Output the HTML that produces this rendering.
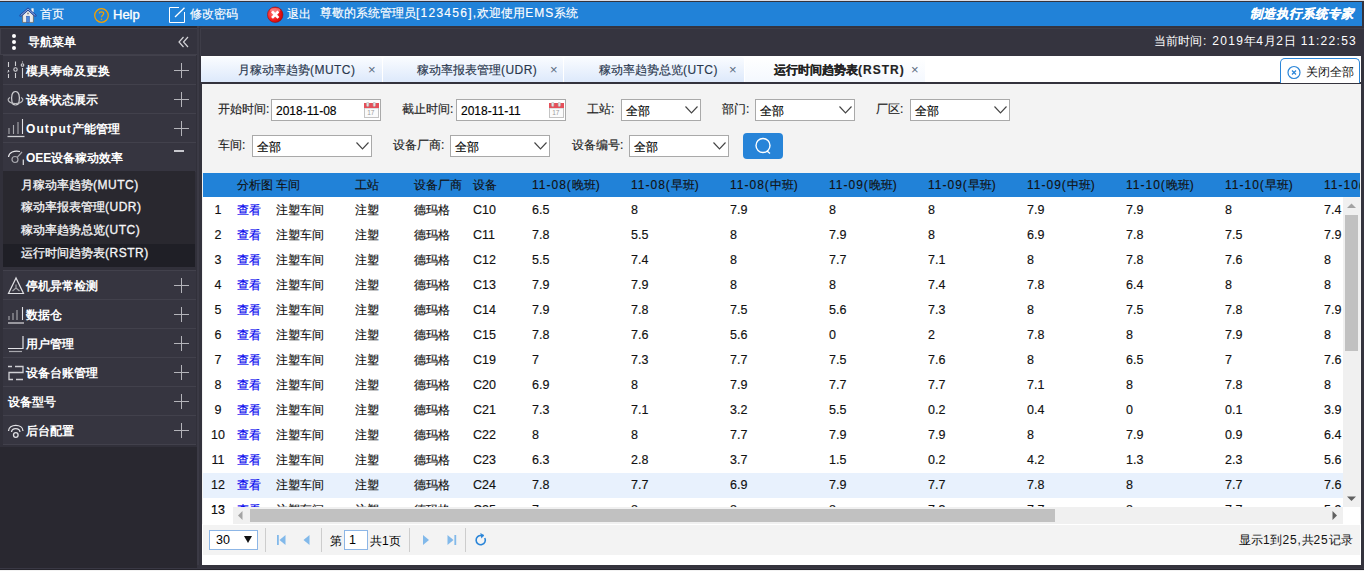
<!DOCTYPE html>
<html><head><meta charset="utf-8">
<style>
*{box-sizing:border-box}
html,body{margin:0;padding:0}
body{width:1364px;height:571px;overflow:hidden;position:relative;background:#34333d;font-family:"Liberation Sans",sans-serif;font-size:12px;color:#000}
.a{position:absolute;white-space:nowrap}
#top0{left:0;top:0;width:1364px;height:1px;background:#dcdce4}
#top1{left:0;top:1px;width:1364px;height:1px;background:#34333d}
#topbar{left:0;top:2px;width:1364px;height:24px;background:#2182d8}
.tt{color:#fff;font-size:12px;top:7px;line-height:14px}
/* sidebar */
#side{left:0;top:26px;width:197px;height:542px;background:#292830}
#sidepanel{left:0;top:55px;width:197px;height:392px;background:#31303a}
#sidestrip{left:197px;top:26px;width:2px;height:543px;background:#3b3a45}
#sidehead{left:0;top:28px;width:198px;height:27px;background:#34333e;border:1px solid #403f4a}
.mi{left:3px;width:193px;height:29px;background:#363540;border-top:1px solid #42414c}
.mt{color:#fff;font-weight:bold;font-size:12px;line-height:14px}
.plus{position:absolute;width:15px;height:15px}
.plus:before{content:"";position:absolute;left:0;top:7px;width:15px;height:1px;background:#b4b4ba}
.plus:after{content:"";position:absolute;left:7px;top:0;width:1px;height:15px;background:#b4b4ba}
#sub{left:3px;top:171px;width:192px;height:96px;background:#29282f}
#subsel{left:3px;top:244px;width:192px;height:23px;background:#1f1f26}
.si{color:#f6f6f8;font-size:12px;line-height:14px;left:21px;-webkit-text-stroke:0.3px #f6f6f8!important}
/* right */
#rline{left:199px;top:26px;width:3px;height:543px;background:#33323c}
#rhead{left:200px;top:28px;width:1164px;height:28px;background:#35343f;border-top:1px solid #3e3d48;border-left:1px solid #3e3d48}
#tabs{left:201px;top:56px;width:1160px;height:27px;background:#fff;border-bottom:1px solid #33323c}
.tab{top:57px;height:25px;background:linear-gradient(#fafcff,#dde9fb);border-radius:3px 3px 0 0}
.tabt{font-size:12px;color:#29374d;top:63px;line-height:14px}
.tabx{font-size:13px;color:#5a6b80;top:63px;line-height:14px}
#content{left:202px;top:84px;width:1159px;height:481px;background:#f3f3f3}
#rborder{left:1361px;top:56px;width:3px;height:515px;background:#34333d}
#bborder{left:197px;top:565px;width:1167px;height:3px;background:#34333d}
.lbl{font-size:12px;color:#222;line-height:14px}
.inp{background:#fff;border:1px solid #a9a9a9;height:22px}
.selt{font-size:12px;color:#000;line-height:14px}
.chev{position:absolute;width:9px;height:9px;border-right:1px solid #555;border-bottom:1px solid #555;transform:rotate(45deg)}
#thead{left:203px;top:173px;width:1157px;height:24px;background:#2182d8;overflow:hidden}
.th{font-size:12px;color:#111;top:5px;line-height:14px}
.th .l{letter-spacing:1px}
#tbody{left:203px;top:197px;width:1140px;height:310px;overflow:hidden;background:#fff;border-top:1px solid #fff}
.row{left:0;width:1140px;height:25px}
.row.hl{background:#e8f1fd}
.td{font-size:12.5px;color:#111;line-height:14px}
.lk{color:#0000ee}
.cj{font-size:12px}

#bwhite{left:0;top:570px;width:1364px;height:1px;background:#f2f2f2}
#bl1{left:0;top:568px;width:1364px;height:1px;background:#393844}
#bl2{left:0;top:569px;width:1364px;height:1px;background:#25242c}

.td,.th,.lbl,.selt,.tabt,.tt,.si{-webkit-text-stroke:0.15px currentColor}

</style></head><body>
<div class="a" id="top0"></div>
<div class="a" id="top1"></div>
<div class="a" id="topbar"></div>
<div class="a" style="left:1362px;top:1px;width:2px;height:25px;background:#34333d"></div>
<svg class="a" style="left:18px;top:4px" width="20" height="20" viewBox="0 0 20 20">
<rect x="13.4" y="4.3" width="2.2" height="4" fill="#f2f2f2"/>
<path d="M4.6 11 L10 6 L15.4 11 V18.4 H4.6 Z" fill="#ebebeb" stroke="#6d5c4a" stroke-width="0.7"/>
<path d="M2.6 11.6 L10 5 L17.4 11.6" fill="none" stroke="#23449c" stroke-width="2.4" stroke-linecap="round"/>
<path d="M2.6 11.6 L10 5 L17.4 11.6" fill="none" stroke="#9cc0f0" stroke-width="0.9"/>
<rect x="9.2" y="8.7" width="1.6" height="1.6" fill="#7a7a7a"/>
<rect x="8.5" y="12.2" width="3" height="6.1" fill="#4a86dc" stroke="#2550a8" stroke-width="0.5"/>
</svg>
<div class="a tt" style="left:40px">首页</div>
<svg class="a" style="left:94px;top:8px" width="16" height="16" viewBox="0 0 16 16">
<circle cx="7.5" cy="7.5" r="6.8" fill="none" stroke="#f4a100" stroke-width="1.3"/>
<path d="M5.3 5.6 C5.3 3.2 9.7 3.2 9.7 5.6 C9.7 7.2 7.5 7.2 7.5 9.2" fill="none" stroke="#f4a100" stroke-width="1.2"/>
<circle cx="7.5" cy="11.3" r="0.8" fill="#f4a100"/>
</svg>
<div class="a tt" style="left:113px;font-size:13px;top:7px;line-height:15px;-webkit-text-stroke:0.35px #fff">Help</div>
<svg class="a" style="left:169px;top:7px" width="17" height="17" viewBox="0 0 17 17">
<path d="M10 0.5 H0.5 V15.5 H15.5 V5" fill="none" stroke="#fff" stroke-width="1"/>
<path d="M6 10 L15.5 0.8" fill="none" stroke="#fff" stroke-width="1.3"/>
</svg>
<div class="a tt" style="left:190px">修改密码</div>
<svg class="a" style="left:267px;top:6px" width="17" height="17" viewBox="0 0 17 17">
<defs><radialGradient id="rg" cx="0.35" cy="0.45" r="0.75"><stop offset="0" stop-color="#ff7070"/><stop offset="0.55" stop-color="#f01818"/><stop offset="1" stop-color="#b00000"/></radialGradient></defs>
<circle cx="8.2" cy="8.7" r="7.8" fill="url(#rg)" stroke="#8a1010" stroke-width="0.5"/>
<ellipse cx="8.2" cy="4.2" rx="5" ry="2.3" fill="#ffb0b0" opacity="0.55"/>
<path d="M5 5.5 L11.4 11.9 M11.4 5.5 L5 11.9" stroke="#fff" stroke-width="2.7"/>
</svg>
<div class="a tt" style="left:287px">退出</div>
<div class="a tt" style="left:320px;top:6px">尊敬的系统管理员<span style="letter-spacing:1.25px">[123456],</span>欢迎使用<span style="letter-spacing:1px">EMS</span>系统</div>
<div class="a tt" style="left:1250px;font-weight:bold;font-style:italic;font-size:12.5px">制造执行系统专家</div>

<div class="a" id="side"></div>
<div class="a" id="sidepanel"></div>
<div class="a" id="sidehead"></div>
<div class="a" style="left:12px;top:34px;width:4px;height:4px;border-radius:2px;background:#fff"></div>
<div class="a" style="left:12px;top:40px;width:4px;height:4px;border-radius:2px;background:#fff"></div>
<div class="a" style="left:12px;top:46px;width:4px;height:4px;border-radius:2px;background:#fff"></div>
<div class="a mt" style="left:28px;top:35px">导航菜单</div>
<svg class="a" style="left:178px;top:36px" width="11" height="12" viewBox="0 0 11 12" fill="none" stroke="#d4d4d8" stroke-width="1.2"><path d="M5.5 1 L1 6 L5.5 11 M10 1 L5.5 6 L10 11"/></svg>

<!-- items -->
<div class="a mi" style="top:55px"></div>
<div class="a mi" style="top:84px"></div>
<div class="a mi" style="top:113px"></div>
<div class="a mi" style="top:142px;height:30px"></div>
<div class="a" id="sub"></div>
<div class="a" id="subsel"></div>
<div class="a mi" style="top:270px"></div>
<div class="a mi" style="top:299px"></div>
<div class="a mi" style="top:328px"></div>
<div class="a mi" style="top:357px"></div>
<div class="a mi" style="top:386px"></div>
<div class="a mi" style="top:415px;height:30px;border-bottom:1px solid #42414c"></div>

<div class="a mt" style="left:26px;top:64px">模具寿命及更换</div>
<div class="a mt" style="left:26px;top:93px">设备状态展示</div>
<div class="a mt" style="left:26px;top:122px"><span style="letter-spacing:1.1px">Output</span>产能管理</div>
<div class="a mt" style="left:26px;top:151px">OEE设备稼动效率</div>
<div class="a si" style="top:178px">月稼动率趋势<span style="letter-spacing:0.5px">(MUTC)</span></div>
<div class="a si" style="top:200px">稼动率报表管理<span style="letter-spacing:0.5px">(UDR)</span></div>
<div class="a si" style="top:223px">稼动率趋势总览<span style="letter-spacing:0.5px">(UTC)</span></div>
<div class="a si" style="top:246px">运行时间趋势表<span style="letter-spacing:0.5px">(RSTR)</span></div>
<div class="a mt" style="left:26px;top:279px">停机异常检测</div>
<div class="a mt" style="left:26px;top:308px">数据仓</div>
<div class="a mt" style="left:26px;top:337px">用户管理</div>
<div class="a mt" style="left:26px;top:366px">设备台账管理</div>
<div class="a mt" style="left:8px;top:395px">设备型号</div>
<div class="a mt" style="left:26px;top:424px">后台配置</div>

<div class="plus" style="left:174px;top:63px"></div>
<div class="plus" style="left:174px;top:92px"></div>
<div class="plus" style="left:174px;top:121px"></div>
<div class="a" style="left:174px;top:150px;width:10px;height:2px;background:#c8c8ce"></div>
<div class="plus" style="left:174px;top:278px"></div>
<div class="plus" style="left:174px;top:307px"></div>
<div class="plus" style="left:174px;top:336px"></div>
<div class="plus" style="left:174px;top:365px"></div>
<div class="plus" style="left:174px;top:394px"></div>
<div class="plus" style="left:174px;top:423px"></div>

<!-- icons -->
<svg class="a" style="left:6px;top:60px" width="20" height="20" viewBox="0 0 20 20" fill="none" stroke="#d0d0d4" stroke-width="1.1">
<path d="M2.5 2 V7 M2.5 10 V11 M2.5 14 V18 M9.5 1.5 V6 M9.5 13 V18 M16.5 8 V18"/>
<path d="M1.5 12 A1.3 1.3 0 0 0 3 11" /><circle cx="9.5" cy="9.5" r="1.7"/><circle cx="16.5" cy="5" r="1.3"/><path d="M16.5 1.5 V2.5"/>
</svg>
<svg class="a" style="left:6px;top:89px" width="20" height="20" viewBox="0 0 20 20" fill="none" stroke="#d0d0d4" stroke-width="1.2">
<path d="M6 13 C5 7 6 2.5 9.5 2.5 C13 2.5 14 7 13 13 C12.5 17 6.5 17 6 13 Z"/>
<path d="M4 8.5 C0 10.5 3 14.5 9.5 14.5 C16 14.5 19 10.5 15 8.5" stroke="#b8b8bc"/>
</svg>
<svg class="a" style="left:6px;top:118px" width="20" height="20" viewBox="0 0 20 20" fill="none" stroke="#d0d0d4" stroke-width="1.1">
<path d="M1.5 18.5 H18.5" stroke-width="1.3"/><path d="M3 10 V16 M7.5 7 V16 M12 4 V16" stroke="#a8a8ae"/><path d="M16.5 1 V16" stroke="#e0e0e4"/>
</svg>
<svg class="a" style="left:6px;top:147px" width="20" height="20" viewBox="0 0 20 20" fill="none" stroke="#d0d0d4" stroke-width="1.2">
<path d="M2.5 10 C3 5.5 8 3 14 4.5" stroke="#e8e8ec"/><circle cx="9" cy="12.5" r="3" stroke="#a8a8ae"/><path d="M11.2 10.3 L16 5" stroke="#a8a8ae"/><path d="M17.3 12.5 V18" stroke="#e0e0e4"/>
</svg>
<svg class="a" style="left:6px;top:276px" width="20" height="20" viewBox="0 0 20 20" fill="none" stroke="#e0e0e4" stroke-width="1.2">
<path d="M10 2 L2.5 17.5 H17.5 Z"/><path d="M10 8.5 V12 L6.5 15 M10 12 L13.5 15" stroke="#a0a0a6"/>
</svg>
<svg class="a" style="left:6px;top:305px" width="20" height="20" viewBox="0 0 20 20" fill="none" stroke="#d0d0d4" stroke-width="1.1">
<path d="M2 18 H18" stroke-width="1.3"/><path d="M3 11 V15 M7 8 V15 M11 5 V15" stroke="#a8a8ae"/><path d="M16.5 2 V15" stroke="#e0e0e4"/>
</svg>
<svg class="a" style="left:6px;top:334px" width="20" height="20" viewBox="0 0 20 20" fill="none" stroke="#e0e0e4" stroke-width="1.2">
<path d="M2 14.5 H17 V2"/><path d="M3 17.5 H16" stroke="#a8a8ae"/>
</svg>
<svg class="a" style="left:6px;top:363px" width="20" height="20" viewBox="0 0 20 20" fill="none" stroke="#d0d0d4" stroke-width="1.3">
<path d="M2 3.5 H6 M9 3.5 H17 V9.5 H3 V16.5 H7 M10 16.5 H17"/>
</svg>
<svg class="a" style="left:6px;top:421px" width="20" height="20" viewBox="0 0 20 20" fill="none" stroke="#e0e0e4" stroke-width="1.3">
<path d="M2.5 10 C2.5 2.5 17 2.5 17 10 M5.5 11 C6 6.5 13.5 6.5 14 11"/><circle cx="9.8" cy="14" r="2.3"/>
</svg>

<div class="a" id="rline"></div>
<div class="a" id="sidestrip"></div>
<div class="a" id="rhead"></div>
<div class="a" style="left:1154px;top:34px;color:#fff;font-size:12px;line-height:14px">当前时间<span style="margin-left:1px;margin-right:6px">:</span><span style="letter-spacing:1.3px">2019</span>年<span style="letter-spacing:1.3px">4</span>月<span style="letter-spacing:1.3px">2</span>日<span style="letter-spacing:1.3px"> 11:22:53</span></div>
<div class="a" id="tabs"></div>
<div class="a" id="rborder"></div>

<div class="a tab" style="left:201px;width:181px"></div>
<div class="a tabt" style="left:238px">月稼动率趋势<span style="letter-spacing:0.45px">(MUTC)</span></div>
<div class="a tabx" style="left:368px">×</div>
<div class="a tab" style="left:383px;width:180px"></div>
<div class="a tabt" style="left:417px">稼动率报表管理<span style="letter-spacing:0.45px">(UDR)</span></div>
<div class="a tabx" style="left:550px">×</div>
<div class="a tab" style="left:564px;width:180px"></div>
<div class="a tabt" style="left:599px">稼动率趋势总览<span style="letter-spacing:0.45px">(UTC)</span></div>
<div class="a tabx" style="left:729px">×</div>
<div class="a tab" style="left:745px;width:180px;background:linear-gradient(#ffffff,#f4f8fe)"></div>
<div class="a tabt" style="left:774px;font-weight:bold;color:#222">运行时间趋势表<span style="letter-spacing:1px">(RSTR)</span></div>
<div class="a tabx" style="left:911px">×</div>

<div class="a" style="left:1280px;top:58px;width:80px;height:25px;border:1px solid #2a85d8;border-bottom:0;border-radius:5px 5px 0 0;background:#fff"></div>
<svg class="a" style="left:1287px;top:65px" width="15" height="15" viewBox="0 0 15 15">
<circle cx="7" cy="7.5" r="6" fill="none" stroke="#2a85d8" stroke-width="1.2"/>
<path d="M5 5.5 L9 9.5 M9 5.5 L5 9.5" stroke="#2a85d8" stroke-width="1.2"/>
</svg>
<div class="a" style="left:1306px;top:65px;font-size:12px;line-height:14px;color:#111">关闭全部</div>

<div class="a" id="content"></div>

<!-- filter row 1 -->
<div class="a lbl" style="left:218px;top:102px">开始时间:</div>
<div class="a inp" style="left:271px;top:99px;width:110px"></div>
<div class="a selt" style="left:276px;top:104px">2018-11-08</div>
<div class="a lbl" style="left:402px;top:102px">截止时间:</div>
<div class="a inp" style="left:456px;top:99px;width:110px"></div>
<div class="a selt" style="left:461px;top:104px">2018-11-11</div>
<div class="a lbl" style="left:587px;top:102px">工站:</div>
<div class="a inp" style="left:621px;top:99px;width:80px"></div>
<div class="a selt" style="left:626px;top:104px">全部</div>
<div class="a lbl" style="left:722px;top:102px">部门:</div>
<div class="a inp" style="left:755px;top:99px;width:100px"></div>
<div class="a selt" style="left:760px;top:104px">全部</div>
<div class="a lbl" style="left:876px;top:102px">厂区:</div>
<div class="a inp" style="left:910px;top:99px;width:100px"></div>
<div class="a selt" style="left:915px;top:104px">全部</div>

<!-- filter row 2 -->
<div class="a lbl" style="left:218px;top:138px">车间:</div>
<div class="a inp" style="left:252px;top:135px;width:120px"></div>
<div class="a selt" style="left:257px;top:140px">全部</div>
<div class="a lbl" style="left:393px;top:138px">设备厂商:</div>
<div class="a inp" style="left:450px;top:135px;width:100px"></div>
<div class="a selt" style="left:455px;top:140px">全部</div>
<div class="a lbl" style="left:572px;top:138px">设备编号:</div>
<div class="a inp" style="left:629px;top:135px;width:100px"></div>
<div class="a selt" style="left:634px;top:140px">全部</div>
<div class="a" style="left:743px;top:133px;width:40px;height:26px;background:#2784d8;border-radius:4px"></div>
<svg class="a" style="left:754px;top:137px" width="19" height="18" viewBox="0 0 19 18" fill="none" stroke="#fff" stroke-width="1.4">
<circle cx="9" cy="8.5" r="7"/><path d="M13 14 L16 16.5"/>
</svg>

<!-- calendar icons -->
<svg class="a" style="left:364px;top:102px" width="15" height="16" viewBox="0 0 15 16">
<rect x="0.5" y="6" width="14" height="9.5" fill="#fbfbfb" stroke="#c4c4c4" stroke-width="1"/>
<rect x="0" y="1" width="15" height="5" fill="#e5505a"/>
<rect x="2.6" y="0.3" width="2.2" height="4.2" rx="1" fill="#e6e6e6" stroke="#b0b0b0" stroke-width="0.6"/>
<rect x="9.2" y="0.3" width="2.2" height="4.2" rx="1" fill="#e6e6e6" stroke="#b0b0b0" stroke-width="0.6"/>
<text x="3.2" y="12.6" font-size="6.5" fill="#9a9a9a" font-family="Liberation Sans">17</text>
</svg>
<svg class="a" style="left:549px;top:102px" width="15" height="16" viewBox="0 0 15 16">
<rect x="0.5" y="6" width="14" height="9.5" fill="#fbfbfb" stroke="#c4c4c4" stroke-width="1"/>
<rect x="0" y="1" width="15" height="5" fill="#e5505a"/>
<rect x="2.6" y="0.3" width="2.2" height="4.2" rx="1" fill="#e6e6e6" stroke="#b0b0b0" stroke-width="0.6"/>
<rect x="9.2" y="0.3" width="2.2" height="4.2" rx="1" fill="#e6e6e6" stroke="#b0b0b0" stroke-width="0.6"/>
<text x="3.2" y="12.6" font-size="6.5" fill="#9a9a9a" font-family="Liberation Sans">17</text>
</svg>
<!-- chevrons -->
<svg class="a" style="left:685px;top:106px" width="13" height="8" viewBox="0 0 13 8"><path d="M0.5 0.5 L6.5 6.8 L12.5 0.5" fill="none" stroke="#444" stroke-width="1.15"/></svg>
<svg class="a" style="left:839px;top:106px" width="13" height="8" viewBox="0 0 13 8"><path d="M0.5 0.5 L6.5 6.8 L12.5 0.5" fill="none" stroke="#444" stroke-width="1.15"/></svg>
<svg class="a" style="left:994px;top:106px" width="13" height="8" viewBox="0 0 13 8"><path d="M0.5 0.5 L6.5 6.8 L12.5 0.5" fill="none" stroke="#444" stroke-width="1.15"/></svg>
<svg class="a" style="left:356px;top:142px" width="13" height="8" viewBox="0 0 13 8"><path d="M0.5 0.5 L6.5 6.8 L12.5 0.5" fill="none" stroke="#444" stroke-width="1.15"/></svg>
<svg class="a" style="left:534px;top:142px" width="13" height="8" viewBox="0 0 13 8"><path d="M0.5 0.5 L6.5 6.8 L12.5 0.5" fill="none" stroke="#444" stroke-width="1.15"/></svg>
<svg class="a" style="left:713px;top:142px" width="13" height="8" viewBox="0 0 13 8"><path d="M0.5 0.5 L6.5 6.8 L12.5 0.5" fill="none" stroke="#444" stroke-width="1.15"/></svg>

<div class="a" id="thead">
<div class="a th" style="left:34px">分析图</div>
<div class="a th" style="left:73px">车间</div>
<div class="a th" style="left:152px">工站</div>
<div class="a th" style="left:211px">设备厂商</div>
<div class="a th" style="left:270px">设备</div>
<div class="a th" style="left:329px"><span class="l">11-08(</span>晚班<span class="l">)</span></div>
<div class="a th" style="left:428px"><span class="l">11-08(</span>早班<span class="l">)</span></div>
<div class="a th" style="left:527px"><span class="l">11-08(</span>中班<span class="l">)</span></div>
<div class="a th" style="left:626px"><span class="l">11-09(</span>晚班<span class="l">)</span></div>
<div class="a th" style="left:725px"><span class="l">11-09(</span>早班<span class="l">)</span></div>
<div class="a th" style="left:824px"><span class="l">11-09(</span>中班<span class="l">)</span></div>
<div class="a th" style="left:923px"><span class="l">11-10(</span>晚班<span class="l">)</span></div>
<div class="a th" style="left:1022px"><span class="l">11-10(</span>早班<span class="l">)</span></div>
<div class="a th" style="left:1121px"><span class="l">11-10(</span>中班<span class="l">)</span></div>
</div>
<div class="a" id="tbody">
<div class="a row" style="top:0px"></div>
<div class="a td" style="left:0;width:30px;text-align:center;top:5px">1</div>
<div class="a td lk cj" style="left:34px;top:5px">查看</div>
<div class="a td cj" style="left:73px;top:5px">注塑车间</div>
<div class="a td cj" style="left:152px;top:5px">注塑</div>
<div class="a td cj" style="left:211px;top:5px">德玛格</div>
<div class="a td" style="left:270px;top:5px">C10</div>
<div class="a td" style="left:329px;top:5px">6.5</div>
<div class="a td" style="left:428px;top:5px">8</div>
<div class="a td" style="left:527px;top:5px">7.9</div>
<div class="a td" style="left:626px;top:5px">8</div>
<div class="a td" style="left:725px;top:5px">8</div>
<div class="a td" style="left:824px;top:5px">7.9</div>
<div class="a td" style="left:923px;top:5px">7.9</div>
<div class="a td" style="left:1022px;top:5px">8</div>
<div class="a td" style="left:1121px;top:5px">7.4</div>
<div class="a row" style="top:25px"></div>
<div class="a td" style="left:0;width:30px;text-align:center;top:30px">2</div>
<div class="a td lk cj" style="left:34px;top:30px">查看</div>
<div class="a td cj" style="left:73px;top:30px">注塑车间</div>
<div class="a td cj" style="left:152px;top:30px">注塑</div>
<div class="a td cj" style="left:211px;top:30px">德玛格</div>
<div class="a td" style="left:270px;top:30px">C11</div>
<div class="a td" style="left:329px;top:30px">7.8</div>
<div class="a td" style="left:428px;top:30px">5.5</div>
<div class="a td" style="left:527px;top:30px">8</div>
<div class="a td" style="left:626px;top:30px">7.9</div>
<div class="a td" style="left:725px;top:30px">8</div>
<div class="a td" style="left:824px;top:30px">6.9</div>
<div class="a td" style="left:923px;top:30px">7.8</div>
<div class="a td" style="left:1022px;top:30px">7.5</div>
<div class="a td" style="left:1121px;top:30px">7.9</div>
<div class="a row" style="top:50px"></div>
<div class="a td" style="left:0;width:30px;text-align:center;top:55px">3</div>
<div class="a td lk cj" style="left:34px;top:55px">查看</div>
<div class="a td cj" style="left:73px;top:55px">注塑车间</div>
<div class="a td cj" style="left:152px;top:55px">注塑</div>
<div class="a td cj" style="left:211px;top:55px">德玛格</div>
<div class="a td" style="left:270px;top:55px">C12</div>
<div class="a td" style="left:329px;top:55px">5.5</div>
<div class="a td" style="left:428px;top:55px">7.4</div>
<div class="a td" style="left:527px;top:55px">8</div>
<div class="a td" style="left:626px;top:55px">7.7</div>
<div class="a td" style="left:725px;top:55px">7.1</div>
<div class="a td" style="left:824px;top:55px">8</div>
<div class="a td" style="left:923px;top:55px">7.8</div>
<div class="a td" style="left:1022px;top:55px">7.6</div>
<div class="a td" style="left:1121px;top:55px">8</div>
<div class="a row" style="top:75px"></div>
<div class="a td" style="left:0;width:30px;text-align:center;top:80px">4</div>
<div class="a td lk cj" style="left:34px;top:80px">查看</div>
<div class="a td cj" style="left:73px;top:80px">注塑车间</div>
<div class="a td cj" style="left:152px;top:80px">注塑</div>
<div class="a td cj" style="left:211px;top:80px">德玛格</div>
<div class="a td" style="left:270px;top:80px">C13</div>
<div class="a td" style="left:329px;top:80px">7.9</div>
<div class="a td" style="left:428px;top:80px">7.9</div>
<div class="a td" style="left:527px;top:80px">8</div>
<div class="a td" style="left:626px;top:80px">8</div>
<div class="a td" style="left:725px;top:80px">7.4</div>
<div class="a td" style="left:824px;top:80px">7.8</div>
<div class="a td" style="left:923px;top:80px">6.4</div>
<div class="a td" style="left:1022px;top:80px">8</div>
<div class="a td" style="left:1121px;top:80px">8</div>
<div class="a row" style="top:100px"></div>
<div class="a td" style="left:0;width:30px;text-align:center;top:105px">5</div>
<div class="a td lk cj" style="left:34px;top:105px">查看</div>
<div class="a td cj" style="left:73px;top:105px">注塑车间</div>
<div class="a td cj" style="left:152px;top:105px">注塑</div>
<div class="a td cj" style="left:211px;top:105px">德玛格</div>
<div class="a td" style="left:270px;top:105px">C14</div>
<div class="a td" style="left:329px;top:105px">7.9</div>
<div class="a td" style="left:428px;top:105px">7.8</div>
<div class="a td" style="left:527px;top:105px">7.5</div>
<div class="a td" style="left:626px;top:105px">5.6</div>
<div class="a td" style="left:725px;top:105px">7.3</div>
<div class="a td" style="left:824px;top:105px">8</div>
<div class="a td" style="left:923px;top:105px">7.5</div>
<div class="a td" style="left:1022px;top:105px">7.8</div>
<div class="a td" style="left:1121px;top:105px">7.9</div>
<div class="a row" style="top:125px"></div>
<div class="a td" style="left:0;width:30px;text-align:center;top:130px">6</div>
<div class="a td lk cj" style="left:34px;top:130px">查看</div>
<div class="a td cj" style="left:73px;top:130px">注塑车间</div>
<div class="a td cj" style="left:152px;top:130px">注塑</div>
<div class="a td cj" style="left:211px;top:130px">德玛格</div>
<div class="a td" style="left:270px;top:130px">C15</div>
<div class="a td" style="left:329px;top:130px">7.8</div>
<div class="a td" style="left:428px;top:130px">7.6</div>
<div class="a td" style="left:527px;top:130px">5.6</div>
<div class="a td" style="left:626px;top:130px">0</div>
<div class="a td" style="left:725px;top:130px">2</div>
<div class="a td" style="left:824px;top:130px">7.8</div>
<div class="a td" style="left:923px;top:130px">8</div>
<div class="a td" style="left:1022px;top:130px">7.9</div>
<div class="a td" style="left:1121px;top:130px">8</div>
<div class="a row" style="top:150px"></div>
<div class="a td" style="left:0;width:30px;text-align:center;top:155px">7</div>
<div class="a td lk cj" style="left:34px;top:155px">查看</div>
<div class="a td cj" style="left:73px;top:155px">注塑车间</div>
<div class="a td cj" style="left:152px;top:155px">注塑</div>
<div class="a td cj" style="left:211px;top:155px">德玛格</div>
<div class="a td" style="left:270px;top:155px">C19</div>
<div class="a td" style="left:329px;top:155px">7</div>
<div class="a td" style="left:428px;top:155px">7.3</div>
<div class="a td" style="left:527px;top:155px">7.7</div>
<div class="a td" style="left:626px;top:155px">7.5</div>
<div class="a td" style="left:725px;top:155px">7.6</div>
<div class="a td" style="left:824px;top:155px">8</div>
<div class="a td" style="left:923px;top:155px">6.5</div>
<div class="a td" style="left:1022px;top:155px">7</div>
<div class="a td" style="left:1121px;top:155px">7.6</div>
<div class="a row" style="top:175px"></div>
<div class="a td" style="left:0;width:30px;text-align:center;top:180px">8</div>
<div class="a td lk cj" style="left:34px;top:180px">查看</div>
<div class="a td cj" style="left:73px;top:180px">注塑车间</div>
<div class="a td cj" style="left:152px;top:180px">注塑</div>
<div class="a td cj" style="left:211px;top:180px">德玛格</div>
<div class="a td" style="left:270px;top:180px">C20</div>
<div class="a td" style="left:329px;top:180px">6.9</div>
<div class="a td" style="left:428px;top:180px">8</div>
<div class="a td" style="left:527px;top:180px">7.9</div>
<div class="a td" style="left:626px;top:180px">7.7</div>
<div class="a td" style="left:725px;top:180px">7.7</div>
<div class="a td" style="left:824px;top:180px">7.1</div>
<div class="a td" style="left:923px;top:180px">8</div>
<div class="a td" style="left:1022px;top:180px">7.8</div>
<div class="a td" style="left:1121px;top:180px">8</div>
<div class="a row" style="top:200px"></div>
<div class="a td" style="left:0;width:30px;text-align:center;top:205px">9</div>
<div class="a td lk cj" style="left:34px;top:205px">查看</div>
<div class="a td cj" style="left:73px;top:205px">注塑车间</div>
<div class="a td cj" style="left:152px;top:205px">注塑</div>
<div class="a td cj" style="left:211px;top:205px">德玛格</div>
<div class="a td" style="left:270px;top:205px">C21</div>
<div class="a td" style="left:329px;top:205px">7.3</div>
<div class="a td" style="left:428px;top:205px">7.1</div>
<div class="a td" style="left:527px;top:205px">3.2</div>
<div class="a td" style="left:626px;top:205px">5.5</div>
<div class="a td" style="left:725px;top:205px">0.2</div>
<div class="a td" style="left:824px;top:205px">0.4</div>
<div class="a td" style="left:923px;top:205px">0</div>
<div class="a td" style="left:1022px;top:205px">0.1</div>
<div class="a td" style="left:1121px;top:205px">3.9</div>
<div class="a row" style="top:225px"></div>
<div class="a td" style="left:0;width:30px;text-align:center;top:230px">10</div>
<div class="a td lk cj" style="left:34px;top:230px">查看</div>
<div class="a td cj" style="left:73px;top:230px">注塑车间</div>
<div class="a td cj" style="left:152px;top:230px">注塑</div>
<div class="a td cj" style="left:211px;top:230px">德玛格</div>
<div class="a td" style="left:270px;top:230px">C22</div>
<div class="a td" style="left:329px;top:230px">8</div>
<div class="a td" style="left:428px;top:230px">8</div>
<div class="a td" style="left:527px;top:230px">7.7</div>
<div class="a td" style="left:626px;top:230px">7.9</div>
<div class="a td" style="left:725px;top:230px">7.9</div>
<div class="a td" style="left:824px;top:230px">8</div>
<div class="a td" style="left:923px;top:230px">7.9</div>
<div class="a td" style="left:1022px;top:230px">0.9</div>
<div class="a td" style="left:1121px;top:230px">6.4</div>
<div class="a row" style="top:250px"></div>
<div class="a td" style="left:0;width:30px;text-align:center;top:255px">11</div>
<div class="a td lk cj" style="left:34px;top:255px">查看</div>
<div class="a td cj" style="left:73px;top:255px">注塑车间</div>
<div class="a td cj" style="left:152px;top:255px">注塑</div>
<div class="a td cj" style="left:211px;top:255px">德玛格</div>
<div class="a td" style="left:270px;top:255px">C23</div>
<div class="a td" style="left:329px;top:255px">6.3</div>
<div class="a td" style="left:428px;top:255px">2.8</div>
<div class="a td" style="left:527px;top:255px">3.7</div>
<div class="a td" style="left:626px;top:255px">1.5</div>
<div class="a td" style="left:725px;top:255px">0.2</div>
<div class="a td" style="left:824px;top:255px">4.2</div>
<div class="a td" style="left:923px;top:255px">1.3</div>
<div class="a td" style="left:1022px;top:255px">2.3</div>
<div class="a td" style="left:1121px;top:255px">5.6</div>
<div class="a row hl" style="top:275px"></div>
<div class="a td" style="left:0;width:30px;text-align:center;top:280px">12</div>
<div class="a td lk cj" style="left:34px;top:280px">查看</div>
<div class="a td cj" style="left:73px;top:280px">注塑车间</div>
<div class="a td cj" style="left:152px;top:280px">注塑</div>
<div class="a td cj" style="left:211px;top:280px">德玛格</div>
<div class="a td" style="left:270px;top:280px">C24</div>
<div class="a td" style="left:329px;top:280px">7.8</div>
<div class="a td" style="left:428px;top:280px">7.7</div>
<div class="a td" style="left:527px;top:280px">6.9</div>
<div class="a td" style="left:626px;top:280px">7.9</div>
<div class="a td" style="left:725px;top:280px">7.7</div>
<div class="a td" style="left:824px;top:280px">7.8</div>
<div class="a td" style="left:923px;top:280px">8</div>
<div class="a td" style="left:1022px;top:280px">7.7</div>
<div class="a td" style="left:1121px;top:280px">7.6</div>
<div class="a row" style="top:300px"></div>
<div class="a td" style="left:0;width:30px;text-align:center;top:305px">13</div>
<div class="a td lk cj" style="left:34px;top:305px">查看</div>
<div class="a td cj" style="left:73px;top:305px">注塑车间</div>
<div class="a td cj" style="left:152px;top:305px">注塑</div>
<div class="a td cj" style="left:211px;top:305px">德玛格</div>
<div class="a td" style="left:270px;top:305px">C25</div>
<div class="a td" style="left:329px;top:305px">7</div>
<div class="a td" style="left:428px;top:305px">8</div>
<div class="a td" style="left:527px;top:305px">8</div>
<div class="a td" style="left:626px;top:305px">8</div>
<div class="a td" style="left:725px;top:305px">7.3</div>
<div class="a td" style="left:824px;top:305px">7.7</div>
<div class="a td" style="left:923px;top:305px">8</div>
<div class="a td" style="left:1022px;top:305px">7.7</div>
<div class="a td" style="left:1121px;top:305px">5.9</div>
</div>
<!-- vertical scrollbar -->
<div class="a" style="left:1343px;top:198px;width:17px;height:309px;background:#f0f0f0"></div>
<div class="a" style="left:1345px;top:215px;width:13px;height:136px;background:#c1c1c1"></div>
<svg class="a" style="left:1347px;top:203px" width="9" height="6" viewBox="0 0 9 6"><path d="M0 5 L4.5 0.5 L9 5 Z" fill="#a3a3a3"/></svg>
<svg class="a" style="left:1347px;top:496px" width="9" height="6" viewBox="0 0 9 6"><path d="M0 0.5 L4.5 5 L9 0.5 Z" fill="#606060"/></svg>
<!-- frozen column white -->
<div class="a" style="left:203px;top:507px;width:30px;height:17px;background:#fff"></div>
<div class="a td" style="left:203px;width:30px;text-align:center;top:503px;font-size:12.5px;line-height:14px">13</div>
<!-- horizontal scrollbar -->
<div class="a" style="left:233px;top:507px;width:1110px;height:17px;background:#f0f0f0"></div>
<div class="a" style="left:250px;top:509px;width:805px;height:13px;background:#c1c1c1"></div>
<svg class="a" style="left:237px;top:511px" width="6" height="9" viewBox="0 0 6 9"><path d="M5.5 0 L1 4.5 L5.5 9 Z" fill="#a3a3a3"/></svg>
<svg class="a" style="left:1332px;top:511px" width="6" height="9" viewBox="0 0 6 9"><path d="M0.5 0 L5 4.5 L0.5 9 Z" fill="#606060"/></svg>
<div class="a" style="left:1343px;top:507px;width:17px;height:17px;background:#fff"></div>
<!-- pagination -->
<div class="a" style="left:202px;top:524px;width:1159px;height:41px;background:#fff"></div>
<div class="a" style="left:203px;top:525px;width:1157px;height:30px;background:#f3f3f3"></div>
<div class="a" style="left:209px;top:530px;width:49px;height:20px;background:#fff;border:1px solid #8db6e6"></div>
<div class="a" style="left:216px;top:533px;font-size:12.5px;line-height:14px">30</div>
<svg class="a" style="left:244px;top:536px" width="8" height="7" viewBox="0 0 8 7"><path d="M0 0 H8 L4 7 Z" fill="#111"/></svg>
<div class="a" style="left:265px;top:528px;width:1px;height:24px;background:#cdcdcd"></div>
<svg class="a" style="left:276px;top:534px" width="12" height="12" viewBox="0 0 12 12"><rect x="1" y="1" width="1.8" height="10" fill="#82b9ea"/><path d="M9.5 1 L3.5 6 L9.5 11 Z" fill="#82b9ea"/></svg>
<svg class="a" style="left:302px;top:534px" width="10" height="12" viewBox="0 0 10 12"><path d="M7.5 1 L1.5 6 L7.5 11 Z" fill="#82b9ea"/></svg>
<div class="a" style="left:321px;top:528px;width:1px;height:24px;background:#cdcdcd"></div>
<div class="a" style="left:330px;top:534px;font-size:12px;line-height:14px">第</div>
<div class="a" style="left:344px;top:530px;width:24px;height:20px;background:#fff;border:1px solid #8db6e6"></div>
<div class="a" style="left:349px;top:533px;font-size:12.5px;line-height:14px">1</div>
<div class="a" style="left:370px;top:534px;font-size:12px;line-height:14px">共1页</div>
<div class="a" style="left:409px;top:528px;width:1px;height:24px;background:#cdcdcd"></div>
<svg class="a" style="left:421px;top:534px" width="10" height="12" viewBox="0 0 10 12"><path d="M2 1 L8 6 L2 11 Z" fill="#82b9ea"/></svg>
<svg class="a" style="left:446px;top:534px" width="12" height="12" viewBox="0 0 12 12"><path d="M1.5 1 L7.5 6 L1.5 11 Z" fill="#82b9ea"/><rect x="8.4" y="1" width="1.8" height="10" fill="#82b9ea"/></svg>
<div class="a" style="left:465px;top:528px;width:1px;height:24px;background:#cdcdcd"></div>
<svg class="a" style="left:474px;top:533px" width="14" height="14" viewBox="0 0 14 14" fill="none" stroke="#2a85d8" stroke-width="1.6">
<path d="M10.8 5 A4.6 4.6 0 1 1 7.5 2.6"/><path d="M6.5 0.6 L10 2.4 L7.2 5" fill="#2a85d8" stroke-width="0.8"/>
</svg>
<div class="a" style="left:1239px;top:533px;font-size:12px;line-height:14px;color:#111">显示<span style="letter-spacing:0.8px">1</span>到<span style="letter-spacing:0.8px">25,</span>共<span style="letter-spacing:0.8px">25</span>记录</div>
<div class="a" id="bborder"></div>

<div class="a" id="bl1"></div><div class="a" id="bl2"></div><div class="a" id="bwhite"></div>
</body></html>
